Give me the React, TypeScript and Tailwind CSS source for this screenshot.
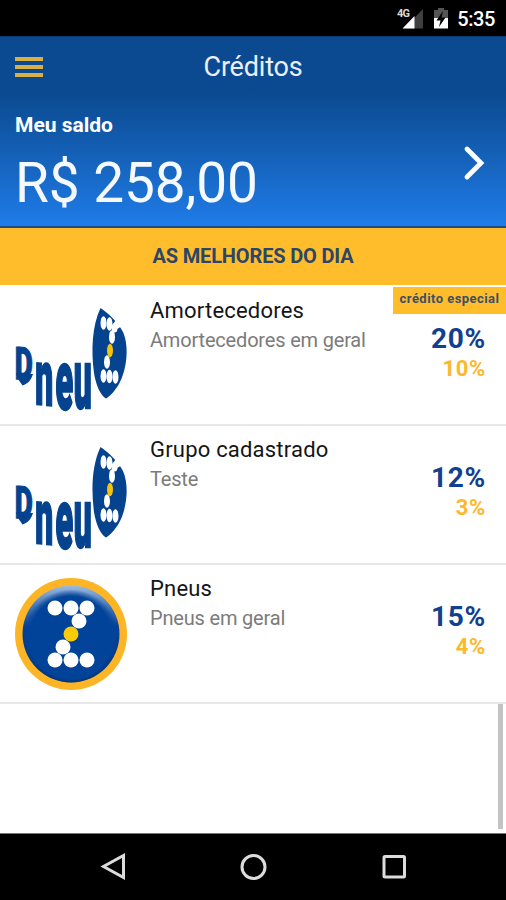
import React from "react";

const dots = [
  [-16, -26], [0, -26], [16, -26], [8, -13], [-8, 13], [-16, 26], [0, 26], [16, 26],
];

function PneuLogo() {
  return (
    <svg width="114" height="106" viewBox="14 306 114 106" className="block overflow-visible" role="img">
      <g fill="#05438f" stroke="#05438f" fontFamily="Roboto, sans-serif" fontWeight="900" fontSize="30">
        <text strokeWidth="0.8" transform="matrix(0.93 0.03 0 1.5 14.800 379)">D</text>
        <path stroke="none" d="M15.800 373L18 379L22.500 385.500C28 383.500 31 380.500 33 374L28 374Z" />
        <text strokeWidth="0.9" transform="matrix(1.06 0.1 0 2.58 35.300 404)">n</text>
        <text strokeWidth="0.9" transform="matrix(1.08 0 0 2.78 55.500 408.500)">e</text>
        <text strokeWidth="0.9" transform="matrix(1.06 0 0 2.78 73.800 408)">u</text>
      </g>
      <path d="M100.500 308C109 314 117 321 123 332C130 348 126 372 119 384C115 391 110 396 106 398.500C100 395 96 385 94 373C91 350 92 326 100.500 308Z" fill="#05438f" />
      <g fill="#fff">
        {[[103.5, 323], [109.5, 324], [114.5, 328], [112, 337], [107, 362], [103.5, 376], [109.5, 376.500], [115.5, 377]].map(([x, y], i) => (
          <ellipse key={i} cx={x} cy={y} rx="3" ry={i === 2 ? 4.5 : 6.7} />
        ))}
        <path d="M116 320L120.500 327L117 329L113 324Z" />
      </g>
      <ellipse cx="110" cy="350.500" rx="3" ry="6.800" fill="#f5c30c" />
    </svg>
  );
}

function TireLogo() {
  return (
    <svg width="114" height="114" viewBox="-57 -57 114 114" className="block" role="img">
      <defs>
        <linearGradient id="shine" x1="0" y1="0" x2="0" y2="1">
          <stop offset="0" stopColor="#9dbbe0" />
          <stop offset="0.2" stopColor="#4a7cba" />
          <stop offset="0.42" stopColor="#04429a" />
          <stop offset="0.75" stopColor="#043a86" />
          <stop offset="1" stopColor="#03265c" />
        </linearGradient>
        <radialGradient id="disc" cx="0.5" cy="0.53" r="0.5">
          <stop offset="0.86" stopColor="#02439a" />
          <stop offset="1" stopColor="#02439a" stopOpacity="0" />
        </radialGradient>
      </defs>
      <circle r="56" fill="#fdb525" />
      <circle r="48.500" fill="url(#shine)" />
      <circle r="48" cy="0.500" fill="url(#disc)" />
      {dots.map(([x, y], i) => (
        <circle key={i} cx={x} cy={y} r="7.500" fill="#fff" />
      ))}
      <circle r="7.500" fill="#fbcb08" />
    </svg>
  );
}

type Item = { title: string; sub: string; main: string; extra: string; tire?: boolean; special?: boolean };

const items: Item[] = [
  { title: "Amortecedores", sub: "Amortecedores em geral", main: "20%", extra: "10%", special: true },
  { title: "Grupo cadastrado", sub: "Teste", main: "12%", extra: "3%" },
  { title: "Pneus", sub: "Pneus em geral", main: "15%", extra: "4%", tire: true },
];

function Row({ item }: { item: Item }) {
  return (
    <li className="relative flex h-[139px] border-b-2 border-[#e8e8e8] pl-[14px] pr-5">
      <div className={item.tire ? "w-[136px] pt-[12px]" : "w-[136px] pt-[19px]"}>{item.tire ? <TireLogo /> : <PneuLogo />}</div>
      <div className="flex-1 pt-[9px] whitespace-nowrap">
        <h2 className="text-[22px] leading-[30px] tracking-[0.2px] text-[#151515]">{item.title}</h2>
        <p className="text-[20px] leading-[28px] tracking-[-0.18px] text-[#7b7b7b]">{item.sub}</p>
      </div>
      <div className="pt-[35px] text-right">
        <div className="text-[28px] font-bold leading-[34px] tracking-[0.7px] text-[#123f8f]">{item.main}</div>
        <div className="text-[22px] font-bold leading-[26px] tracking-[0.7px] text-[#fdb82c]">{item.extra}</div>
      </div>
      {item.special && (
        <div className="absolute right-0 top-0 flex h-[27px] w-[113px] items-center justify-center whitespace-nowrap bg-[#ffbd2c] pb-[3px] text-[13px] font-bold tracking-[0.45px] text-[#3d4f68]">
          crédito especial
        </div>
      )}
    </li>
  );
}

export default function App() {
  return (
    <div className="flex h-[900px] w-[506px] flex-col overflow-hidden bg-white font-[Roboto,sans-serif]">
      <div className="flex h-9 items-center justify-end bg-black pr-[11px] pt-[2px] text-white">
        <svg width="60" height="36" viewBox="396 1 60 36">
          <path d="M422 9V28.500H403Z" fill="#3f3f3f" />
          <path d="M413.500 16V28.500H401.500Z" fill="#fff" />
          <path d="M395 6H410V17H395Z" fill="#000" />
          <text x="396" y="17" fill="#d8d8d8" fontSize="11" fontWeight="700" textLength="13">4G</text>
          <path d="M433 10H437V8H443V10H447V19H433Z" fill="#555" />
          <path d="M433 18H447V28.500H433Z" fill="#fff" />
          <path d="M442 11L435.500 20.500H439.500L438 27L444.500 17.500H440.500Z" fill="#000" />
        </svg>
        <span className="text-[20px] font-medium leading-none tracking-[-0.4px]">5:35</span>
      </div>
      <header className="h-[192px] border-b-2 border-[#1d4c80] bg-linear-to-b from-[#0b4a90] from-30% to-[#1f7ce8]">
        <div className="flex h-[62px] items-center border-t border-[#0a3c74] px-[15px]">
          <button className="flex w-7 flex-col gap-[4px] pb-[2px]" aria-label="Menu">
            <span className="h-1 w-7 bg-[#d9ae45]" />
            <span className="h-1 w-7 bg-[#d9ae45]" />
            <span className="h-1 w-7 bg-[#d9ae45]" />
          </button>
          <h1 className="flex-1 pr-7 pb-px text-center text-[27px] tracking-[-0.2px] text-[#e9f0fb]">Créditos</h1>
        </div>
        <div className="flex pl-[15px] pr-[20px]">
          <div className="flex-1 pt-[12px] text-white">
            <div className="text-[21px] font-bold leading-[30px]">Meu saldo</div>
            <div className="mt-[22px] text-[55px] leading-[42px] tracking-[-0.1px] text-[#f5f9ff]">R$ 258,00</div>
          </div>
          <svg width="24" height="38" viewBox="462 144 24 38" className="mt-[46px]">
            <path d="M467 149L481 163L467 177" fill="none" stroke="#fff" strokeWidth="4.800" strokeLinecap="round" strokeLinejoin="miter" />
          </svg>
        </div>
      </header>
      <div className="mb-px flex h-[57px] items-center justify-center bg-[#ffbd2c] pb-[2px] text-[20px] font-bold tracking-[-0.15px] text-[#2d4668]">AS MELHORES DO DIA</div>
      <ul className="pt-px">
        {items.map((it) => (
          <Row key={it.title} item={it} />
        ))}
      </ul>
      <div className="flex flex-1 justify-end pb-1 pr-[3px]">
        <div className="w-[5px] bg-[#c3c3c3]" />
      </div>
      <nav className="h-[67px] border-t border-[#777] bg-black">
        <svg width="506" height="66" viewBox="0 834 506 66" fill="none" stroke="#dcdcdc" strokeWidth="3">
          <path d="M123.500 855.500V877.500L103.500 866.500Z" />
          <circle cx="253.500" cy="867" r="11.500" />
          <rect x="384" y="856.500" width="20.500" height="20.500" rx="1" />
        </svg>
      </nav>
    </div>
  );
}
